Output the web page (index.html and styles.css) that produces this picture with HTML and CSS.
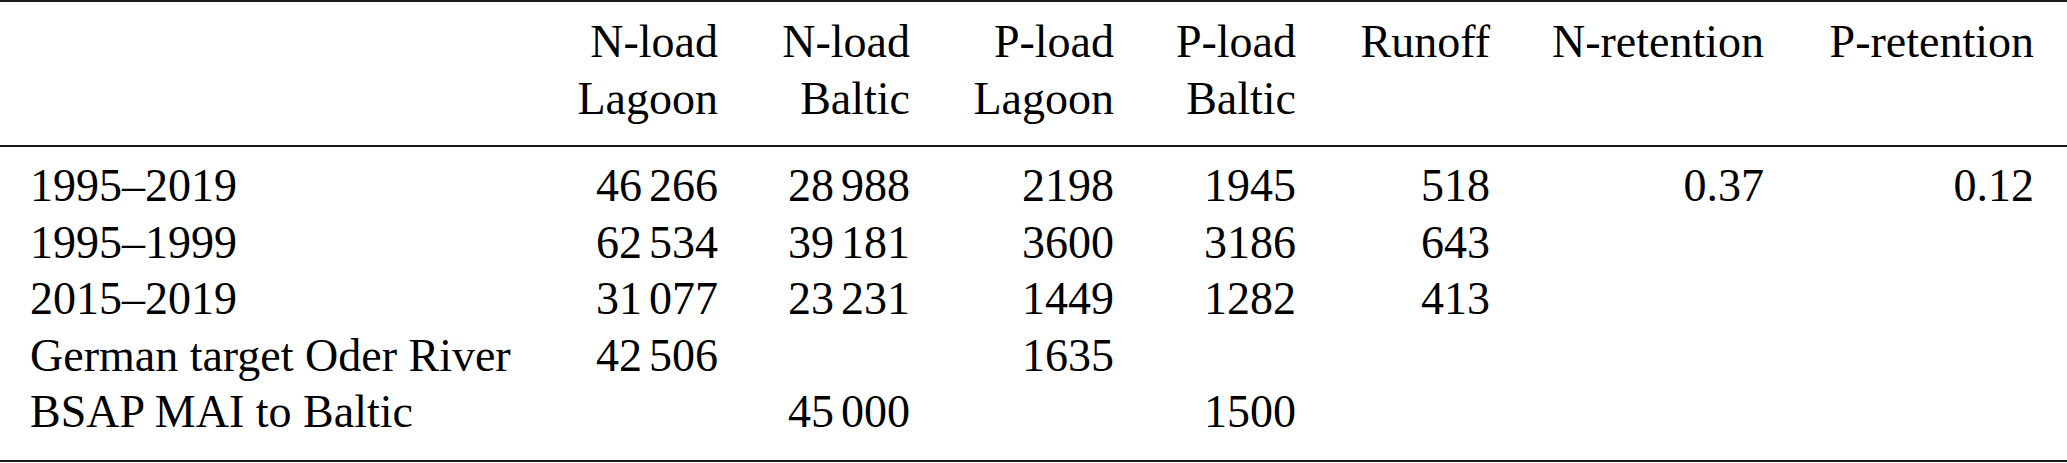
FILE: index.html
```html
<!DOCTYPE html>
<html lang="en">
<head>
    <meta charset="UTF-8">
    <title>Nutrient loads</title>
    <link rel="stylesheet" href="styles.css">
</head>
<body>

    <table class="loads">
        <colgroup>
            <col class="c-label">
            <col class="c-nlag">
            <col class="c-nbal">
            <col class="c-plag">
            <col class="c-pbal">
            <col class="c-run">
            <col class="c-nret">
            <col class="c-pret">
        </colgroup>
        <thead>
            <tr>
                <th></th>
                <th>N-load<br>Lagoon</th>
                <th>N-load<br>Baltic</th>
                <th>P-load<br>Lagoon</th>
                <th>P-load<br>Baltic</th>
                <th>Runoff</th>
                <th>N-retention</th>
                <th class="last">P-retention</th>
            </tr>
        </thead>
        <tbody>
            <tr class="first-row">
                <td class="label">1995–2019</td>
                <td>46<span class="gap"></span>266</td>
                <td>28<span class="gap"></span>988</td>
                <td>2198</td>
                <td>1945</td>
                <td>518</td>
                <td>0.37</td>
                <td class="last">0.12</td>
            </tr>
            <tr>
                <td class="label">1995–1999</td>
                <td>62<span class="gap"></span>534</td>
                <td>39<span class="gap"></span>181</td>
                <td>3600</td>
                <td>3186</td>
                <td>643</td>
                <td></td>
                <td class="last"></td>
            </tr>
            <tr>
                <td class="label">2015–2019</td>
                <td>31<span class="gap"></span>077</td>
                <td>23<span class="gap"></span>231</td>
                <td>1449</td>
                <td>1282</td>
                <td>413</td>
                <td></td>
                <td class="last"></td>
            </tr>
            <tr>
                <td class="label">German target Oder River</td>
                <td>42<span class="gap"></span>506</td>
                <td></td>
                <td>1635</td>
                <td></td>
                <td></td>
                <td></td>
                <td class="last"></td>
            </tr>
            <tr class="last-row">
                <td class="label">BSAP MAI to Baltic</td>
                <td></td>
                <td>45<span class="gap"></span>000</td>
                <td></td>
                <td>1500</td>
                <td></td>
                <td></td>
                <td class="last"></td>
            </tr>
        </tbody>
    </table>

</body>
</html>
```

FILE: styles.css
```css
body {
    margin: 0;
    padding: 0;
    background-color: #fff;
    color: #000;
}
.loads {
    width: 2067px;
    table-layout: fixed;
    border-collapse: collapse;
    font-family: "Liberation Serif", "Nimbus Roman", "DejaVu Serif", serif;
    font-size: 46px;
    line-height: 56.5px;
    border-top: 2px solid #1a1a1a;
    border-bottom: 2px solid #1a1a1a;
}
.c-label { width: 450px; }
.c-nlag { width: 268px; }
.c-nbal { width: 192px; }
.c-plag { width: 204px; }
.c-pbal { width: 182px; }
.c-run { width: 194px; }
.c-nret { width: 274px; }
.c-pret { width: 303px; }
.loads th, .loads td {
    padding: 0;
    text-align: right;
    font-weight: normal;
    white-space: nowrap;
    vertical-align: top;
}
.loads .last {
    padding-right: 33px;
}
.loads thead th {
    padding-top: 12px;
    padding-bottom: 18px;
    border-bottom: 2px solid #1a1a1a;
}
.loads td.label {
    text-align: left;
    padding-left: 30px;
}
/* thin space between digit groups */
.gap {
    display: inline-block;
    width: 7px;
}
.first-row td {
    padding-top: 11px;
}
.last-row td {
    padding-bottom: 19px;
}
```
